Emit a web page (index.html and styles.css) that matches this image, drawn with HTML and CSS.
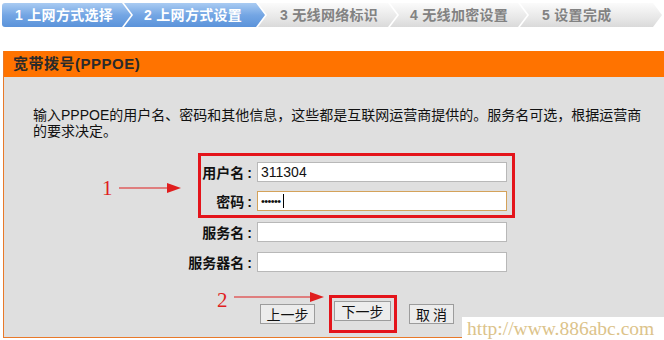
FILE: index.html
```html
<!DOCTYPE html>
<html lang="zh-CN">
<head>
<meta charset="utf-8">
<title>设置向导</title>
<link rel="stylesheet" href="styles.css">
</head>
<body>
<div class="page">
  <div class="steps">
    <div class="step step-first active s1">1 上网方式选择</div>
    <div class="step active s2">2 上网方式设置</div>
    <div class="step s3">3 无线网络标识</div>
    <div class="step s4">4 无线加密设置</div>
    <div class="step s5">5 设置完成</div>
  </div>

  <div class="panel">
    <div class="panel-head">宽带拨号(PPPOE)</div>
    <div class="panel-body">
      <p class="intro">输入PPPOE的用户名、密码和其他信息，这些都是互联网运营商提供的。服务名可选，根据运营商的要求决定。</p>
      <div class="form">
        <div class="hl-group">
          <div class="row">
            <span class="lbl">用户名<span class="colon">:</span></span>
            <div class="field">311304</div>
          </div>
          <div class="row row-2">
            <span class="lbl">密码<span class="colon">:</span></span>
            <div class="field field-focus"><span class="dots">••••••</span><span class="caret"></span></div>
          </div>
        </div>
        <div class="row row-plain row-3">
          <span class="lbl">服务名<span class="colon">:</span></span>
          <div class="field"></div>
        </div>
        <div class="row row-plain row-4">
          <span class="lbl">服务器名<span class="colon">:</span></span>
          <div class="field"></div>
        </div>
      </div>
      <div class="buttons">
        <button class="btn">上一步</button>
        <div class="hl-btn"><button class="btn">下一步</button></div>
        <button class="btn btn-cancel">取 消</button>
      </div>
    </div>
  </div>

  <div class="note note-1">1</div>
  <svg class="arrow arrow-1" width="62" height="12" viewBox="0 0 62 12"><line x1="0" y1="6" x2="50" y2="6" stroke="#e01e1e" stroke-width="1.2"/><polygon points="48,1 62,6 48,11" fill="#e01e1e"/></svg>
  <div class="note note-2">2</div>
  <svg class="arrow arrow-2" width="90" height="12" viewBox="0 0 90 12"><line x1="0" y1="6" x2="78" y2="6" stroke="#e01e1e" stroke-width="1.2"/><polygon points="76,1 90,6 76,11" fill="#e01e1e"/></svg>

  <div class="watermark">http://www.886abc.com</div>
</div>
</body>
</html>
```

FILE: styles.css
```css
html, body {
  margin: 0;
  padding: 0;
  background: #ffffff;
}

.page {
  position: relative;
  width: 664px;
  height: 340px;
  overflow: hidden;
  font-family: "Liberation Sans", "Noto Sans CJK SC", sans-serif;
}

/* ---------- step bar ---------- */
.steps {
  display: flex;
  margin: 3px 0 0 2px;
  height: 24px;
  border-radius: 3px 0 0 3px;
  overflow: hidden;
}

.step {
  flex: none;
  height: 24px;
  line-height: 24px;
  font-size: 14px;
  letter-spacing: 0.3px;
  font-weight: bold;
  color: #828282;
  padding-left: 20px;
  box-sizing: border-box;
  margin-left: -7px;
  background: linear-gradient(#fbfbfb, #e8e8e8 60%, #dadada);
  clip-path: polygon(0 0, calc(100% - 9px) 0, 100% 50%, calc(100% - 9px) 100%, 0 100%, 9px 50%);
  white-space: nowrap;
}

.step-first {
  margin-left: 0;
  padding-left: 13px;
  clip-path: polygon(0 0, calc(100% - 9px) 0, 100% 50%, calc(100% - 9px) 100%, 0 100%);
}

.step.active {
  color: #ffffff;
  background: linear-gradient(#a9cbf2, #74a6e4 50%, #5b93da);
}

.s1 { width: 129px; }
.s2 { width: 141px; }
.s3 { width: 139px; padding-left: 22px; }
.s4 { width: 137px; padding-left: 20px; }
.s5 { width: 142px; padding-left: 22px; }

/* ---------- panel ---------- */
.panel {
  margin: 24px 0 0 3px;
  border-left: 1px solid #e8792a;
  border-bottom: 1px solid #e8792a;
}

.panel-head {
  height: 26px;
  line-height: 26px;
  background: #ff7300;
  color: #2a2a2a;
  font-weight: bold;
  font-size: 15px;
  letter-spacing: 0.5px;
  padding-left: 9px;
}

.panel-body {
  background: #dfdfdf;
  height: 260px;
  box-sizing: border-box;
  padding-top: 30px;
}

.intro {
  margin: 0 0 0 29px;
  width: 612px;
  font-size: 14px;
  line-height: 16px;
  color: #111111;
}

.form {
  margin-top: 14px;
}

.row {
  display: flex;
  align-items: center;
  height: 20px;
}

.lbl {
  flex: none;
  text-align: right;
  font-size: 14px;
  font-weight: bold;
  color: #111111;
  white-space: nowrap;
}

.colon {
  display: inline-block;
  margin: 0 4px 0 3px;
}

.field {
  flex: none;
  width: 250px;
  height: 20px;
  box-sizing: border-box;
  margin-left: 1px;
  background: #ffffff;
  border: 1px solid #b8b8b8;
  font-size: 14px;
  line-height: 18px;
  padding-left: 3px;
  color: #111111;
  display: flex;
  align-items: center;
}

.field-focus {
  border-color: #d4a25a;
}

.dots {
  font-size: 11px;
  letter-spacing: -0.6px;
}

.caret {
  display: inline-block;
  width: 1px;
  height: 14px;
  background: #000;
  margin-left: 2px;
}

.hl-group {
  margin-left: 194px;
  width: 317px;
  box-sizing: border-box;
  border: 3px solid #e4141b;
  padding: 6px 5px 4px 0;
}

.hl-group .lbl {
  width: 55px;
}

.row-2 {
  margin-top: 9px;
}

.row-plain {
  margin-left: 156px;
}

.row-plain .lbl {
  width: 96px;
}

.row-3 { margin-top: 4px; }
.row-4 { margin-top: 10px; }

/* ---------- buttons ---------- */
.buttons {
  display: flex;
  align-items: center;
  margin: 23px 0 0 256px;
}

.btn {
  height: 20px;
  padding: 0;
  border: 1px solid #9c9c9c;
  background: #ececec;
  font-family: "Noto Sans CJK SC", sans-serif;
  font-size: 14px;
  line-height: 18px;
  color: #111;
  width: 55px;
  box-sizing: border-box;
}

.hl-btn {
  margin-left: 14px;
  border: 3px solid #e4141b;
  padding: 3px 3px 3px 2px;
  height: 26px;
  box-sizing: content-box;
}

.hl-btn .btn {
  width: 57px;
}

.btn-cancel {
  margin-left: 12px;
  width: 45px;
}

/* ---------- annotations (overlay) ---------- */
.note {
  position: absolute;
  font-family: "Liberation Serif", serif;
  font-size: 21px;
  line-height: 21px;
  color: #e01e1e;
}

.note-1 { left: 102px; top: 178px; }
.note-2 { left: 217px; top: 290px; }

.arrow {
  position: absolute;
}

.arrow-1 { left: 119px; top: 182px; }
.arrow-2 { left: 234px; top: 291px; }

.watermark {
  position: absolute;
  right: 0;
  bottom: 0;
  width: 202px;
  height: 23px;
  box-sizing: border-box;
  background: #ffffff;
  padding-left: 5px;
  font-family: "Liberation Serif", serif;
  font-size: 19.5px;
  line-height: 24px;
  color: #dcc38a;
  white-space: nowrap;
}
```
